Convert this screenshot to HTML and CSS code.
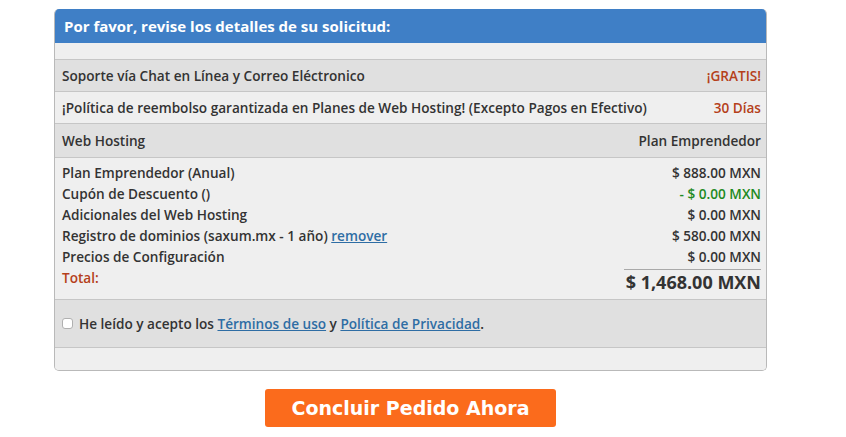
FILE: index.html
```html
<!DOCTYPE html>
<html lang="es">
<head>
<meta charset="utf-8">
<title>Resumen del pedido</title>
<link rel="stylesheet" href="styles.css">
</head>
<body>
<div class="wrap">
  <div class="panel">
    <div class="panel-head">Por favor, revise los detalles de su solicitud:</div>
    <div class="row spacer"></div>
    <div class="row dark">
      <span>Soporte vía Chat en Línea y Correo Eléctronico</span>
      <span class="hl">¡GRATIS!</span>
    </div>
    <div class="row light">
      <span>¡Política de reembolso garantizada en Planes de Web Hosting! (Excepto Pagos en Efectivo)</span>
      <span class="hl">30 Días</span>
    </div>
    <div class="row dark tall">
      <span>Web Hosting</span>
      <span>Plan Emprendedor</span>
    </div>
    <div class="details">
      <div class="labels">
        <div class="line">Plan Emprendedor (Anual)</div>
        <div class="line">Cupón de Descuento ()</div>
        <div class="line">Adicionales del Web Hosting</div>
        <div class="line">Registro de dominios (saxum.mx - 1 año) <a href="#" class="link">remover</a></div>
        <div class="line">Precios de Configuración</div>
        <div class="line total-label">Total:</div>
      </div>
      <div class="amounts">
        <div class="line">$ 888.00 MXN</div>
        <div class="line green">- $ 0.00 MXN</div>
        <div class="line">$ 0.00 MXN</div>
        <div class="line">$ 580.00 MXN</div>
        <div class="line">$ 0.00 MXN</div>
        <div class="total">$ 1,468.00 MXN</div>
      </div>
    </div>
    <div class="row dark agree">
      <label class="check"><span class="box"></span><span>He leído y acepto los <a href="#" class="link">Términos de uso</a> y <a href="#" class="link">Política de Privacidad</a>.</span></label>
    </div>
    <div class="row bottom"></div>
  </div>
  <div class="actions">
    <button class="btn">Concluir Pedido Ahora</button>
  </div>
</div>
</body>
</html>
```
FILE: styles.css
```css
* { box-sizing: border-box; }
body {
  margin: 0;
  background: #fff;
  font-family: "Open Sans", "Noto Sans", sans-serif;
  color: #333;
}
.wrap {
  width: 713px;
  margin-left: 54px;
  padding-top: 9px;
}
.panel {
  border: 1px solid #b9b9b9;
  border-top: 0;
  border-radius: 5px;
  overflow: hidden;
  background: #efefef;
}
.panel-head {
  height: 34px;
  background: #3f7fc6;
  color: #fff;
  font-weight: 700;
  font-size: 15px;
  padding-left: 10px;
  display: flex;
  align-items: center;
  margin: 0 -1px;
}
.row {
  display: flex;
  justify-content: space-between;
  align-items: center;
  border-bottom: 1px solid #c6c6c6;
  font-size: 13.6px;
  font-weight: 600;
  padding: 0 5px 0 7px;
}
.spacer { height: 17px; background: #efefef; }
.dark { height: 32px; background: #e0e0e0; }
.light { height: 32px; background: #efefef; }
.tall { height: 34px; }
.hl { color: #b5401a; }
.details {
  display: flex;
  justify-content: space-between;
  height: 142px;
  padding: 4px 5px 0 7px;
  border-bottom: 1px solid #c6c6c6;
  font-size: 13.6px;
  font-weight: 600;
}
.line { height: 21px; line-height: 21px; }
.amounts { display: flex; flex-direction: column; align-items: flex-end; }
.green { color: #1e8a22; }
.total-label { color: #b5401a; }
.total {
  margin-top: 2px;
  border-top: 1px solid #a9a9a9;
  width: 137px;
  font-size: 18px;
  font-weight: 700;
  line-height: 25px;
  text-align: right;
}
.link { color: #2e6da4; text-decoration: underline; }
.agree { height: 48px; }
.check { display: flex; align-items: center; }
.box {
  width: 11px;
  height: 11px;
  border: 1px solid #b0b0b0;
  border-radius: 3px;
  background: #fff;
  margin-right: 6px;
}
.bottom { height: 22px; border-bottom: 0; background: #efefef; }
.actions {
  display: flex;
  justify-content: center;
  padding-top: 18px;
}
.btn {
  width: 291px;
  height: 38px;
  border: 0;
  border-radius: 3px;
  background: #fb6b1c;
  color: #fff;
  font-family: "DejaVu Sans", sans-serif;
  font-weight: 700;
  font-size: 19px;
}
```
